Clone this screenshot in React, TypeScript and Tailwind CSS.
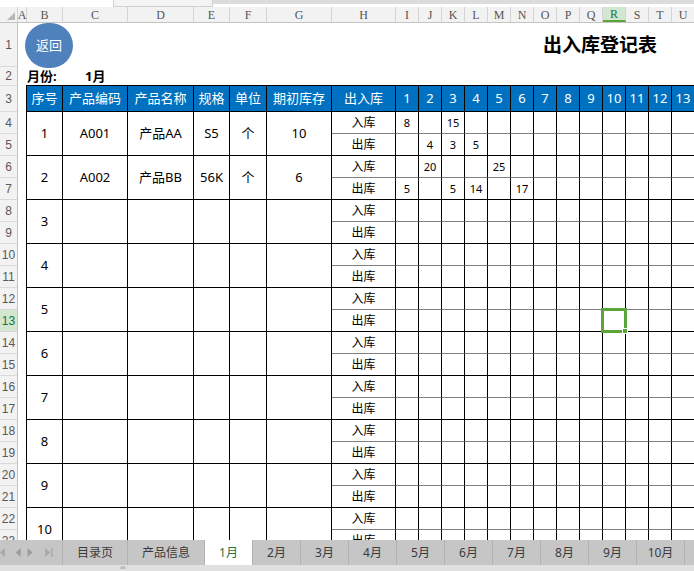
import React from 'react';

const headCols: [string, string][] = [
  ['A', 'w-[9px]'],
  ['B', 'w-[36px]'],
  ['C', 'w-[65px]'],
  ['D', 'w-[66px]'],
  ['E', 'w-[36px]'],
  ['F', 'w-[37px]'],
  ['G', 'w-[65px]'],
  ['H', 'w-[64px]'],
  ['I', 'w-[23px]'],
  ['J', 'w-[23px]'],
  ['K', 'w-[23px]'],
  ['L', 'w-[23px]'],
  ['M', 'w-[23px]'],
  ['N', 'w-[23px]'],
  ['O', 'w-[23px]'],
  ['P', 'w-[23px]'],
  ['Q', 'w-[23px]'],
  ['R', 'w-[23px]'],
  ['S', 'w-[23px]'],
  ['T', 'w-[23px]'],
  ['U', 'w-[23px]'],
];

const fixedW = ['w-[36px]', 'w-[65px]', 'w-[66px]', 'w-[36px]', 'w-[37px]', 'w-[65px]'];
const headerLabels = ['序号', '产品编码', '产品名称', '规格', '单位', '期初库存'];
const days = Array.from({ length: 13 }, (_, i) => i + 1);

type Group = {
  vals: string[];
  inV: Record<number, string>;
  outV: Record<number, string>;
};

const groups: Group[] = [
  { vals: ['1', 'A001', '产品AA', 'S5', '个', '10'], inV: { 1: '8', 3: '15' }, outV: { 2: '4', 3: '3', 4: '5' } },
  { vals: ['2', 'A002', '产品BB', '56K', '个', '6'], inV: { 2: '20', 5: '25' }, outV: { 1: '5', 3: '5', 4: '14', 6: '17' } },
  ...Array.from({ length: 8 }, (_, i) => ({ vals: [String(i + 3), '', '', '', '', ''], inV: {}, outV: {} })),
];

const rowHeads = Array.from({ length: 23 }, (_, i) => i + 1);

const tabs: [string, string][] = [
  ['目录页', 'w-[65px]'],
  ['产品信息', 'w-[77px]'],
  ['1月', 'w-[48px]'],
  ['2月', 'w-[48px]'],
  ['3月', 'w-[48px]'],
  ['4月', 'w-[48px]'],
  ['5月', 'w-[48px]'],
  ['6月', 'w-[48px]'],
  ['7月', 'w-[48px]'],
  ['8月', 'w-[48px]'],
  ['9月', 'w-[48px]'],
  ['10月', 'w-[48px]'],
];

function rowHeadClass(n: number) {
  if (n === 1) return 'h-[44px]';
  if (n === 2) return 'h-[19px]';
  if (n === 3) return 'h-[26px]';
  return 'h-[22px]';
}

function DayRow({ label, values, bottom, selectedDay }: { label: string; values: Record<number, string>; bottom: string; selectedDay?: number }) {
  return (
    <div className="flex h-[22px]">
      <div className={`w-[64px] shrink-0 border-r border-black ${bottom} flex items-center justify-center text-[12px] leading-none`}>
        {label}
      </div>
      {days.map((d) => (
        <div
          key={d}
          className={`relative w-[23px] shrink-0 border-r border-black ${bottom} flex items-center justify-center text-[11px] leading-none`}
        >
          {values[d] ?? ''}
          {selectedDay === d && (
            <>
              <div className="pointer-events-none absolute -left-[2px] -top-[2px] z-10 h-[25px] w-[26px] border-[3px] border-[#5ba53a]" />
              <div className="pointer-events-none absolute -bottom-[3px] -right-[3px] z-20 h-[6px] w-[6px] border border-white bg-[#5ba53a]" />
            </>
          )}
        </div>
      ))}
    </div>
  );
}

export default function App() {
  return (
    <div className="relative flex h-[571px] w-[694px] flex-col overflow-hidden bg-white font-['Noto_Sans','Noto_Sans_CJK_SC',sans-serif] text-black">
      {/* top strip */}
      <div className="flex h-[7px] shrink-0">
        <div className="w-[113px] bg-white" />
        <div className="w-[100px] border-x border-b border-[#d0d0d0] bg-[#f4f4f4]" />
        <div className="flex-1 border-t-4 border-[#dcdcdc] bg-white" />
      </div>

      {/* column headers */}
      <div className="flex h-[16px] shrink-0 border-b border-[#c4c4c4] bg-[#f2f2f2]">
        <div className="relative w-[18px] shrink-0 border-r border-[#d4d4d4]">
          <svg className="absolute bottom-[2px] right-[2px]" width="8" height="8" viewBox="0 0 8 8">
            <polygon points="8,0 8,8 0,8" fill="#b8b8b8" />
          </svg>
        </div>
        {headCols.map(([l, w]) => (
          <div
            key={l}
            className={`${w} shrink-0 flex items-center justify-center font-['Liberation_Serif',serif] text-[12px] leading-none ${
              l === 'R'
                ? 'border-r border-[#d4d4d4] border-b-2 border-b-[#5ba53a] bg-[#d3e6cf] text-[#217346]'
                : 'border-r border-[#d4d4d4] text-[#555]'
            }`}
          >
            {l}
          </div>
        ))}
      </div>

      {/* sheet */}
      <div className="flex min-h-0 flex-1 overflow-hidden">
        {/* row headers */}
        <div className="flex w-[18px] shrink-0 flex-col border-r border-[#c4c4c4] bg-[#f2f2f2]">
          {rowHeads.map((n) => (
            <div
              key={n}
              className={`${rowHeadClass(n)} shrink-0 flex items-center justify-center border-b font-['Liberation_Sans',sans-serif] text-[12px] leading-none ${
                n === 13 ? 'border-[#d4d4d4] bg-[#d3e6cf] text-[#217346]' : 'border-[#d9d9d9] text-[#595959]'
              }`}
            >
              {n}
            </div>
          ))}
        </div>

        {/* content */}
        <div className="flex min-w-0 flex-1 flex-col">
          {/* row 1 */}
          <div className="flex h-[44px] shrink-0 items-start">
            <div className="relative z-10 ml-[7px] flex h-[45px] w-[48px] items-center justify-center rounded-full bg-[#4f81bd] text-[13px] leading-none text-white">
              返回
            </div>
            <div className="ml-auto mr-[37px] self-center text-[19px] font-bold leading-none">出入库登记表</div>
          </div>

          {/* row 2 */}
          <div className="flex h-[18px] shrink-0 items-center text-[13px] font-bold leading-none">
            <span className="ml-[9px] w-[58px]">月份:</span>
            <span>1月</span>
          </div>

          {/* table */}
          <div className="ml-[8px] w-[669px] border-l border-t border-black">
            <div className="flex h-[26px] bg-[#0070c0] text-[13px] leading-none text-white">
              {headerLabels.map((h, i) => (
                <div key={h} className={`${fixedW[i]} shrink-0 flex items-center justify-center border-b border-r border-black`}>
                  {h}
                </div>
              ))}
              <div className="flex w-[64px] shrink-0 items-center justify-center border-b border-r border-black">出入库</div>
              {days.map((d) => (
                <div key={d} className="flex w-[23px] shrink-0 items-center justify-center border-b border-r border-black">
                  {d}
                </div>
              ))}
            </div>

            {groups.map((g, gi) => (
              <div key={gi} className="flex h-[44px]">
                {g.vals.map((v, i) => (
                  <div
                    key={i}
                    className={`${fixedW[i]} shrink-0 flex items-center justify-center border-b border-r border-black text-[13px] leading-none`}
                  >
                    {v}
                  </div>
                ))}
                <div className="flex flex-col">
                  <DayRow label="入库" values={g.inV} bottom="border-b border-b-[#808080]" />
                  <DayRow label="出库" values={g.outV} bottom="border-b border-b-black" selectedDay={gi === 4 ? 10 : undefined} />
                </div>
              </div>
            ))}
          </div>
        </div>
      </div>

      {/* sheet tabs */}
      <div className="flex h-[25px] shrink-0 bg-[#c6c6c6] text-[12px] leading-none text-[#3a3a3a]">
        <div className="flex w-[63px] shrink-0 items-center border-r border-[#b2b2b2]">
          <svg width="63" height="25" viewBox="0 0 63 25">
            <polygon points="0,12.5 5,8 5,17" fill="#a8a8a8" />
            <polygon points="16,12.5 21,8 21,17" fill="#9c9c9c" />
            <polygon points="33,12.5 28,8 28,17" fill="#9c9c9c" />
            <polygon points="51,12.5 46,8 46,17" fill="#a8a8a8" />
            <rect x="52" y="8" width="1.5" height="9" fill="#a8a8a8" />
          </svg>
        </div>
        {tabs.map(([t, w]) => (
          <div
            key={t}
            className={`${w} shrink-0 flex items-center justify-center border-r border-[#b2b2b2] ${
              t === '1月' ? 'bg-white text-[#217346]' : ''
            }`}
          >
            {t}
          </div>
        ))}
        <div className="flex-1" />
      </div>

      {/* bottom strip */}
      <div className="relative h-[6px] shrink-0 bg-[#e0e0e0]">
        <div className="absolute left-[120px] top-[1px] h-[3px] w-[6px] rounded-t-full bg-[#bdbdbd]" />
      </div>
    </div>
  );
}
